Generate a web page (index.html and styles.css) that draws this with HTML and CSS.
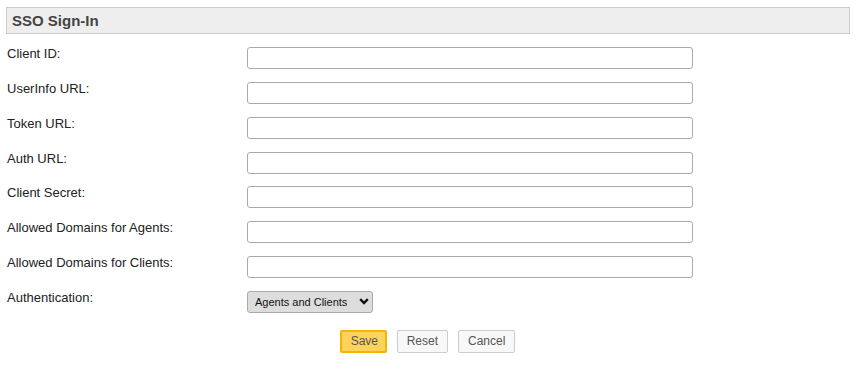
FILE: index.html
```html
<!DOCTYPE html>
<html lang="en">
<head>
    <meta charset="UTF-8">
    <title>SSO Sign-In</title>
    <link rel="stylesheet" href="styles.css">
</head>
<body>
    <div class="section-title">SSO Sign-In</div>

    <form class="settings">
        <label class="field-label" for="client_id">Client ID:</label>
        <input class="field-input" id="client_id" type="text">

        <label class="field-label" for="userinfo_url">UserInfo URL:</label>
        <input class="field-input" id="userinfo_url" type="text">

        <label class="field-label" for="token_url">Token URL:</label>
        <input class="field-input" id="token_url" type="text">

        <label class="field-label" for="auth_url">Auth URL:</label>
        <input class="field-input" id="auth_url" type="text">

        <label class="field-label" for="client_secret">Client Secret:</label>
        <input class="field-input" id="client_secret" type="text">

        <label class="field-label" for="agent_domains">Allowed Domains for Agents:</label>
        <input class="field-input" id="agent_domains" type="text">

        <label class="field-label" for="client_domains">Allowed Domains for Clients:</label>
        <input class="field-input" id="client_domains" type="text">

        <label class="field-label" for="auth_mode">Authentication:</label>
        <div class="select-wrap">
            <select class="field-select" id="auth_mode">
                <option>Agents and Clients</option>
                <option>Agents Only</option>
                <option>Clients Only</option>
            </select>
            <svg class="select-arrow" width="10" height="7" viewBox="0 0 10 7">
                <polyline points="1.2,1.2 5,5 8.8,1.2" fill="none" stroke="#111" stroke-width="2.4"/>
            </svg>
        </div>
    </form>

    <div class="actions">
        <button class="btn btn-primary" type="button">Save</button>
        <button class="btn" type="button">Reset</button>
        <button class="btn" type="button">Cancel</button>
    </div>
</body>
</html>
```

FILE: styles.css
```css
body {
    font-family: "Liberation Sans", Arial, sans-serif;
    font-size: 13px;
    color: #222;
    margin: 0;
    padding: 7px 7px 0 6px;
    background: #fff;
}
.section-title {
    background: #eee;
    border: 1px solid #ccc;
    height: 25px;
    line-height: 25px;
    padding: 0 5px;
    font-size: 15px;
    font-weight: bold;
    color: #444;
}
.settings {
    display: grid;
    grid-template-columns: 240px 446px;
    grid-auto-rows: 34.85px;
    margin: 13px 0 0 1px;
}
.field-label {
    line-height: 13px;
    color: #222;
}
.field-input {
    box-sizing: border-box;
    width: 446px;
    height: 22px;
    margin: 0;
    border: 1px solid #aaa;
    border-radius: 3px;
    background: #fff;
    font: 13px "Liberation Sans", Arial, sans-serif;
    padding: 0 4px;
}
.select-wrap {
    position: relative;
    width: 126px;
    height: 22px;
}
.select-arrow {
    position: absolute;
    right: 4px;
    top: 7px;
    pointer-events: none;
}
.field-select {
    appearance: none;
    box-sizing: border-box;
    width: 126px;
    height: 22px;
    margin: 0;
    padding: 0 0 0 7px;
    border: 1px solid #aaa;
    border-radius: 3px;
    background: #ddd;
    color: #111;
    font: 11px "Liberation Sans", Arial, sans-serif;
}
.actions {
    display: flex;
    justify-content: center;
    gap: 10px;
    margin-top: 4px;
    padding-right: 1px;
}
.btn {
    box-sizing: border-box;
    height: 23px;
    padding: 0 9px 1px;
    border: 1px solid #ccc;
    border-radius: 2px;
    background: #f8f8f8;
    color: #555;
    font: 12px "Liberation Sans", Arial, sans-serif;
    cursor: pointer;
}
.btn-primary {
    width: 47px;
    border: 2px solid #f5b400;
    background: #ffd25e;
}
```
